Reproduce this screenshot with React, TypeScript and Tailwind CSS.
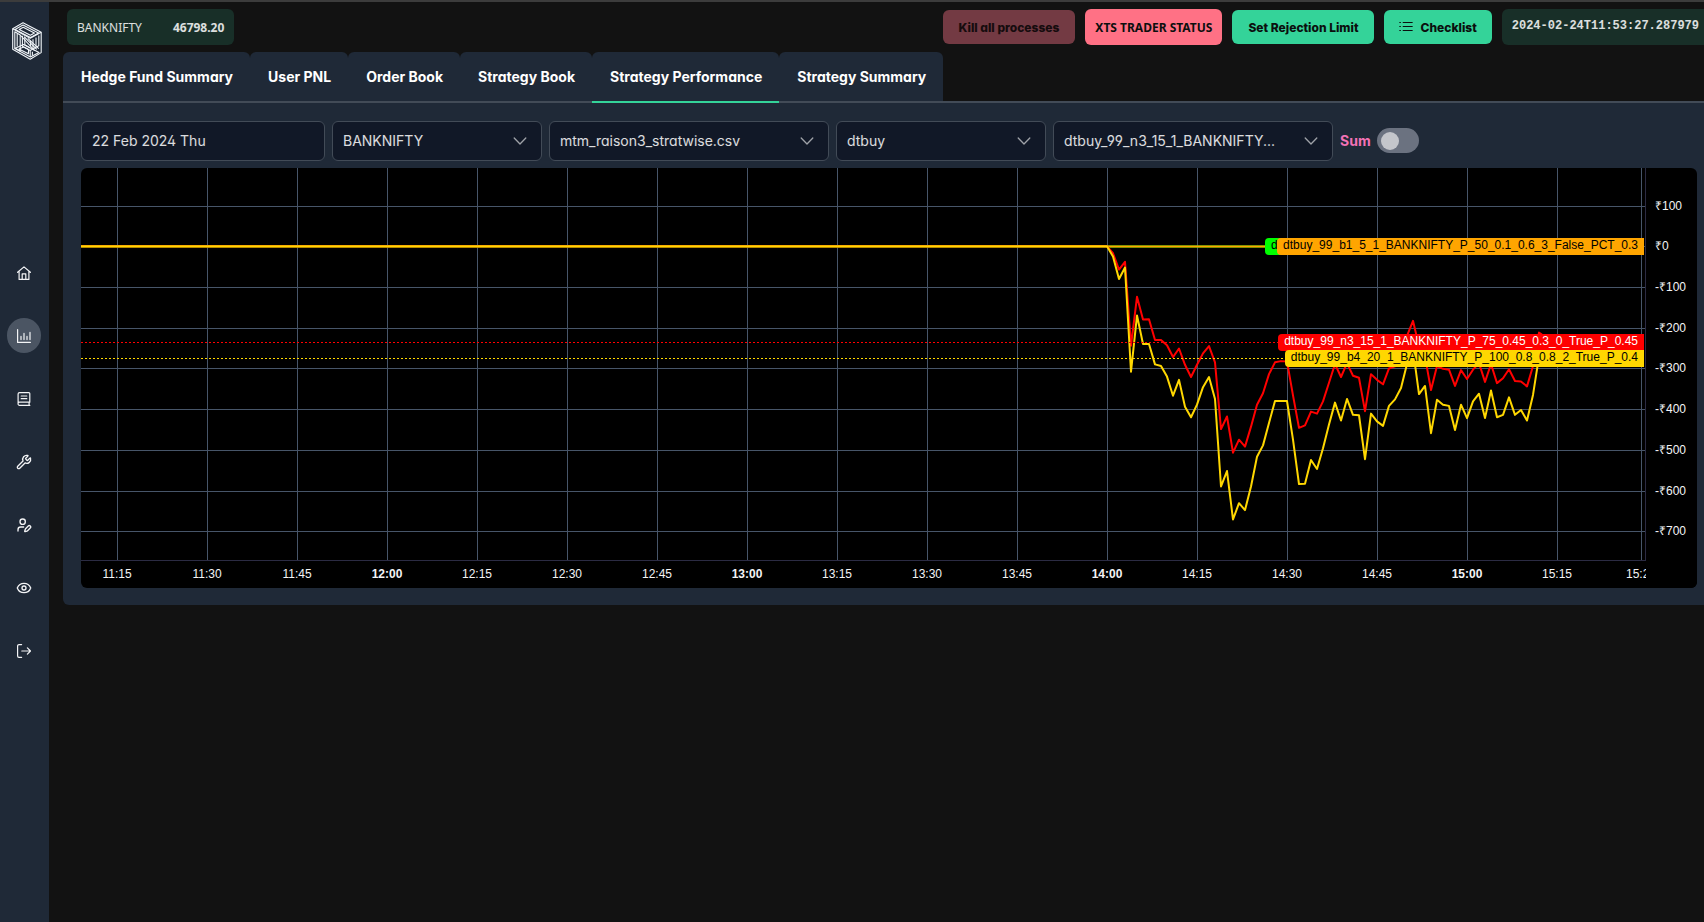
import type { ReactNode } from "react";
import { Eye, UserPen, Wrench } from "lucide-react";
import clsx from "clsx";

// minute by minute P&L from 14:00
const redPnl = [
  0, -17, -57, -38, -244, -124, -180, -179, -230, -230, -243, -272, -251, -291, -321, -291, -263, -245, -285, -449,
  -418, -507, -475, -492, -443, -389, -361, -314, -285, -282, -283, -366, -446, -440, -406, -411, -381, -335, -289,
  -321, -287, -318, -323, -405, -314, -328, -339, -300, -295, -271, -220, -183, -246, -271, -353, -294, -301, -303,
  -343, -304, -326, -303, -287, -333, -289, -336, -324, -302, -331, -332, -344, -294, -212, -222, -236,
];
const yellowPnl = [
  0, -25, -80, -52, -308, -170, -240, -240, -290, -294, -320, -367, -328, -394, -420, -389, -346, -321, -375, -590,
  -552, -671, -631, -648, -590, -517, -489, -434, -380, -380, -380, -475, -584, -583, -525, -547, -496, -438, -384,
  -428, -375, -414, -415, -523, -411, -430, -441, -392, -376, -348, -289, -254, -363, -343, -459, -377, -389, -392,
  -451, -389, -422, -381, -362, -422, -354, -420, -414, -371, -414, -402, -428, -365, -271, -275,
];

const LAST_MINUTE = 15 * 60 + 29;
const PLOT_BOTTOM = 392;
const AXIS_WIDTH = 52;

// x is counted from the right edge of the chart, so it is always negative
const xAt = (minute: number) => -56 - (LAST_MINUTE - minute) * 6;
const yAt = (value: number) => 78.35 - value * 0.407;

const toPoints = (values: number[]) =>
  `-4000,${yAt(0)} ` + values.map((v, i) => `${xAt(14 * 60 + i)},${yAt(v)}`).join(" ");

const formatTime = (m: number) => `${Math.floor(m / 60)}:${String(m % 60).padStart(2, "0")}`;

const timeTicks = [...Array.from({ length: 17 }, (_, i) => 11 * 60 + 15 + i * 15), LAST_MINUTE];
const priceTicks = [100, 0, -100, -200, -300, -400, -500, -600, -700];

function Chart() {
  return (
    <div className="relative h-[420px] overflow-hidden rounded-md bg-black font-['Liberation_Sans',sans-serif] text-xs">
      <svg className="block h-full w-full" role="img" aria-label="Strategy performance">
        <svg x="100%" overflow="visible">
          <g stroke="#475569" shapeRendering="crispEdges">
            {timeTicks.map((m) => (
              <line key={m} x1={xAt(m) + 0.5} x2={xAt(m) + 0.5} y1="0" y2={PLOT_BOTTOM} />
            ))}
            {priceTicks.map((p) => (
              <line key={p} x1="-4000" x2={-AXIS_WIDTH} y1={Math.round(yAt(p)) + 0.5} y2={Math.round(yAt(p)) + 0.5} />
            ))}
          </g>
          <g stroke="#2b2b43" shapeRendering="crispEdges">
            <line x1="-51.5" x2="-51.5" y1="0" y2={PLOT_BOTTOM} />
            <line x1="-4000" x2="-51" y1="392.5" y2="392.5" />
          </g>
          <g fill="none" strokeWidth="2" strokeLinejoin="round">
            <line x1="-4000" x2="-56" y1="78.5" y2="78.5" stroke="#00ff00" />
            <line x1="-4000" x2="-56" y1="78.5" y2="78.5" stroke="#ffa500" />
            <polyline points={toPoints(redPnl)} stroke="#ff0000" />
            <polyline points={toPoints(yellowPnl)} stroke="#ffd700" />
          </g>
          <g strokeDasharray="2 2" shapeRendering="crispEdges">
            <line x1="-4000" x2={-AXIS_WIDTH} y1="174.5" y2="174.5" stroke="#ff0000" />
            <line x1="-4000" x2={-AXIS_WIDTH} y1="190.5" y2="190.5" stroke="#ffd700" />
          </g>
          <g fill="#f3f4f6">
            {priceTicks.map((p) => (
              <text key={p} x="-42" y={Math.round(yAt(p)) + 4}>
                {p < 0 ? "-" : ""}₹{Math.abs(p)}
              </text>
            ))}
          </g>
          <g fill="#f3f4f6" textAnchor="middle">
            {timeTicks.map((m) => (
              <text key={m} x={xAt(m)} y="410" fontWeight={m % 60 === 0 ? 700 : 400}>
                {formatTime(m)}
              </text>
            ))}
          </g>
          <rect x="-51" y="393" width="51" height="27" fill="#000" />
        </svg>
      </svg>

      {/* Series titles */}
      <div className="absolute top-[70px] right-[53px] flex h-[17px] leading-[15px] text-black">
        <span className="-mr-1 h-full w-4 rounded-l-sm bg-[#00ff00] pl-1.5">d</span>
        <span className="h-full rounded-l-sm bg-[#ffa500] px-1.5">dtbuy_99_b1_5_1_BANKNIFTY_P_50_0.1_0.6_3_False_PCT_0.3</span>
      </div>
      <div className="absolute top-[166px] right-[53px] h-[17px] rounded-l-sm bg-[#ff0000] px-1.5 leading-[15px] text-white">
        dtbuy_99_n3_15_1_BANKNIFTY_P_75_0.45_0.3_0_True_P_0.45
      </div>
      <div className="absolute top-[182px] right-[53px] h-[17px] rounded-l-sm bg-[#ffd700] px-1.5 leading-[15px] text-black">
        dtbuy_99_b4_20_1_BANKNIFTY_P_100_0.8_0.8_2_True_P_0.4
      </div>
    </div>
  );
}

function Icon({ children }: { children: ReactNode }) {
  return (
    <svg
      viewBox="0 0 14 14"
      className="size-3.5"
      fill="none"
      stroke="currentColor"
      strokeWidth="1.2"
      strokeLinecap="round"
      strokeLinejoin="round"
    >
      {children}
    </svg>
  );
}

function Logo() {
  return (
    <svg viewBox="0 0 30 38" className="h-[38px] w-[30px]" fill="none" stroke="#f1f5f9" strokeWidth="1.1" strokeLinejoin="round">
      <path d="M11 .7 29.2 10.3V30.6L18.2 37.2.7 27.3V6.7Z" />
      <path d="M11 3 26.6 11 18.5 15.6 3 7.4Z" />
      <path d="M11.2 5.2 22.4 11 18.4 13.3 7.2 7.4Z" />
      <path d="M.7 6.7 18.2 16.3 29.2 10.3M2.8 9.8V26L8.2 29V13Z" />
      <path d="M5.2 11.4V24.4M10.4 13.8V24.2L18.2 28.4 26.8 23.8V13.4M12.8 15.2V22.8L18.4 26" />
      <path d="M8.2 13 22.6 28.6M12 14.6 24.8 27.4M15.8 16.4 26.8 26.6" />
      <path d="M18.6 18.6V24M21 17.2V26.4M24 15.6V24.8" />
      <path d="M2.8 26.6 11.4 22.6 27 30.4 18.4 35Z" />
      <path d="M7 27 11.6 25 16.6 27.6 16.4 31.8ZM18.2 28.4V34.8M20.4 29.8V33.4" />
    </svg>
  );
}

const navItems = [
  {
    label: "Home",
    icon: (
      <Icon>
        <path d="M.6 6.3 7 .9l6.4 5.4M2.1 5.2v8.2h9.8V5.2M5.2 13.2V7.8h3.6v5.4" />
      </Icon>
    ),
  },
  {
    label: "Charts",
    active: true,
    icon: (
      <Icon>
        <path d="M.6.6v12.8h12.8" />
        <path d="M4 7.6v3M7 4.4v6.2M10 7.6v3M13 3.6v7" strokeWidth="1.5" opacity=".8" />
      </Icon>
    ),
  },
  {
    label: "Book",
    icon: (
      <Icon>
        <path d="M12.8 10.2H2.6a1.5 1.5 0 0 0 0 3.2h10.2M1.1 11.8V2.1A1.5 1.5 0 0 1 2.6.6h9.2a1 1 0 0 1 1 1v8.6M12.1 10.4v2.8M4.2 4h5.6M4.2 6.7h5.6" />
      </Icon>
    ),
  },
  { label: "Tools", icon: <Wrench className="size-4" /> },
  { label: "Edit user", icon: <UserPen className="size-4" /> },
  { label: "Watch", icon: <Eye className="size-4" /> },
  {
    label: "Sign out",
    icon: (
      <Icon>
        <path d="M4.6.6H2A1.4 1.4 0 0 0 .6 2v10A1.4 1.4 0 0 0 2 13.4h2.6M4.8 7h8.6M10.4 3.9 13.5 7l-3.1 3.1" />
      </Icon>
    ),
  },
];

function Sidebar() {
  return (
    <aside className="flex w-[49px] shrink-0 flex-col bg-[#1f2937] text-gray-100">
      <div className="flex justify-center pt-5 pl-1">
        <Logo />
      </div>
      <nav className="mt-[195px] flex flex-col items-center gap-7 pr-0.5">
        {navItems.map((item) => (
          <a
            key={item.label}
            href="#"
            aria-label={item.label}
            className={clsx("flex h-[35px] w-[34px] items-center justify-center rounded-full", item.active && "bg-[#4b5563]")}
          >
            {item.icon}
          </a>
        ))}
      </nav>
    </aside>
  );
}

function Header() {
  return (
    <header className="flex h-[50px] items-center justify-between pl-[18px] text-xs">
      <div className="flex h-9 items-center gap-[31px] rounded-md bg-[#182f28] px-2.5 pt-0.5 font-['Noto_Sans',sans-serif] text-white/85">
        <span>BANKNIFTY</span>
        <span className="font-bold">46798.20</span>
      </div>
      <div className="flex items-center gap-2.5 font-extrabold text-[#0b0f0e]">
        <button disabled className="h-[34px] rounded-md bg-[#733a43] px-4 pt-0.5 text-[#160c0e]">
          Kill all processes
        </button>
        <button className="h-9 rounded-md bg-[#ff7185] px-2.5 pt-0.5 font-['Noto_Sans',sans-serif] font-bold">XTS TRADER STATUS</button>
        <button className="h-[34px] rounded-md bg-[#34d399] px-4 pt-0.5">Set Rejection Limit</button>
        <button className="flex h-[34px] items-center gap-[7px] rounded-md bg-[#34d399] px-[15px]">
          <svg viewBox="0 0 14 14" className="size-3.5" fill="none" stroke="currentColor" strokeWidth="1.2" strokeLinecap="round">
            <path d="M4.2 2.5h9M4.2 6.5h9M4.2 10.5h9M.8 2.5h.6M.8 6.5h.6M.8 10.5h.6" />
          </svg>
          <span className="pt-0.5">Checklist</span>
        </button>
        <div className="h-9 rounded-l-md bg-[#182f28] pt-[9px] pr-[5px] pl-2.5 font-['Liberation_Mono',monospace] font-bold text-white/85">
          2024-02-24T11:53:27.287979
        </div>
      </div>
    </header>
  );
}

const tabs = ["Hedge Fund Summary", "User PNL", "Order Book", "Strategy Book", "Strategy Performance", "Strategy Summary"];

function Tabs() {
  return (
    <div role="tablist" className="flex border-b-2 border-[#424b57]">
      {tabs.map((tab) => (
        <button
          key={tab}
          role="tab"
          aria-selected={tab === "Strategy Performance"}
          className={clsx(
            "-mb-0.5 h-[51px] rounded-t-md border-b-2 bg-[#1f2937] pr-[17px] pl-[18px] text-sm font-bold text-white",
            tab === "Strategy Performance" ? "border-[#34d399]" : "border-[#424b57]"
          )}
        >
          {tab}
        </button>
      ))}
    </div>
  );
}

interface DropdownProps {
  label: string;
  value: string;
  wide?: boolean;
}

function Dropdown({ label, value, wide }: DropdownProps) {
  return (
    <div className={clsx("relative", wide ? "w-[280px]" : "w-[210px]")}>
      <select
        aria-label={label}
        defaultValue={value}
        className="h-10 w-full appearance-none rounded-md border border-[#424b57] bg-[#111827] pr-10 pl-2.5 text-sm text-white/85"
      >
        <option>{value}</option>
      </select>
      <svg
        viewBox="0 0 14 14"
        className="pointer-events-none absolute top-[13px] right-[15px] size-3.5 text-white/60"
        fill="none"
        stroke="currentColor"
        strokeWidth="1.3"
        strokeLinecap="round"
        strokeLinejoin="round"
      >
        <path d="M1.2 4 7 10l5.8-6" />
      </svg>
    </div>
  );
}

function Filters() {
  return (
    <div className="flex items-center gap-[7px]">
      <input
        type="text"
        aria-label="Date"
        defaultValue="22 Feb 2024 Thu"
        className="h-10 w-[244px] rounded-md border border-[#424b57] bg-[#111827] px-2.5 pb-0.5 text-sm text-white/85"
      />
      <Dropdown label="Index" value="BANKNIFTY" />
      <Dropdown label="File" value="mtm_raison3_stratwise.csv" wide />
      <Dropdown label="Strategy" value="dtbuy" />
      <Dropdown label="Variant" value="dtbuy_99_n3_15_1_BANKNIFTY..." wide />
      <div className="flex items-center gap-1.5 pb-px">
        <label htmlFor="sum" className="text-sm font-bold text-[#f472b6]">
          Sum
        </label>
        <input
          id="sum"
          type="checkbox"
          className="flex h-[25px] w-[42px] appearance-none items-center rounded-full bg-[#6b7280] px-1 before:size-[18px] before:rounded-full before:bg-[#c4c6cb] checked:justify-end"
        />
      </div>
    </div>
  );
}

export default function App() {
  return (
    <div className="flex min-h-screen overflow-hidden border-t-2 border-[#3c3c3c] bg-[#121212] font-['Inter',sans-serif] [font-feature-settings:'cv02','cv03','cv04','cv11']">
      <Sidebar />
      <main className="min-w-0 flex-1">
        <Header />
        <div className="pl-3.5">
          <Tabs />
          <section className="rounded-bl-md bg-[#1f2937] pt-[18px] pr-[7px] pb-[17px] pl-[18px]">
            <Filters />
            <div className="mt-[7px]">
              <Chart />
            </div>
          </section>
        </div>
      </main>
    </div>
  );
}
